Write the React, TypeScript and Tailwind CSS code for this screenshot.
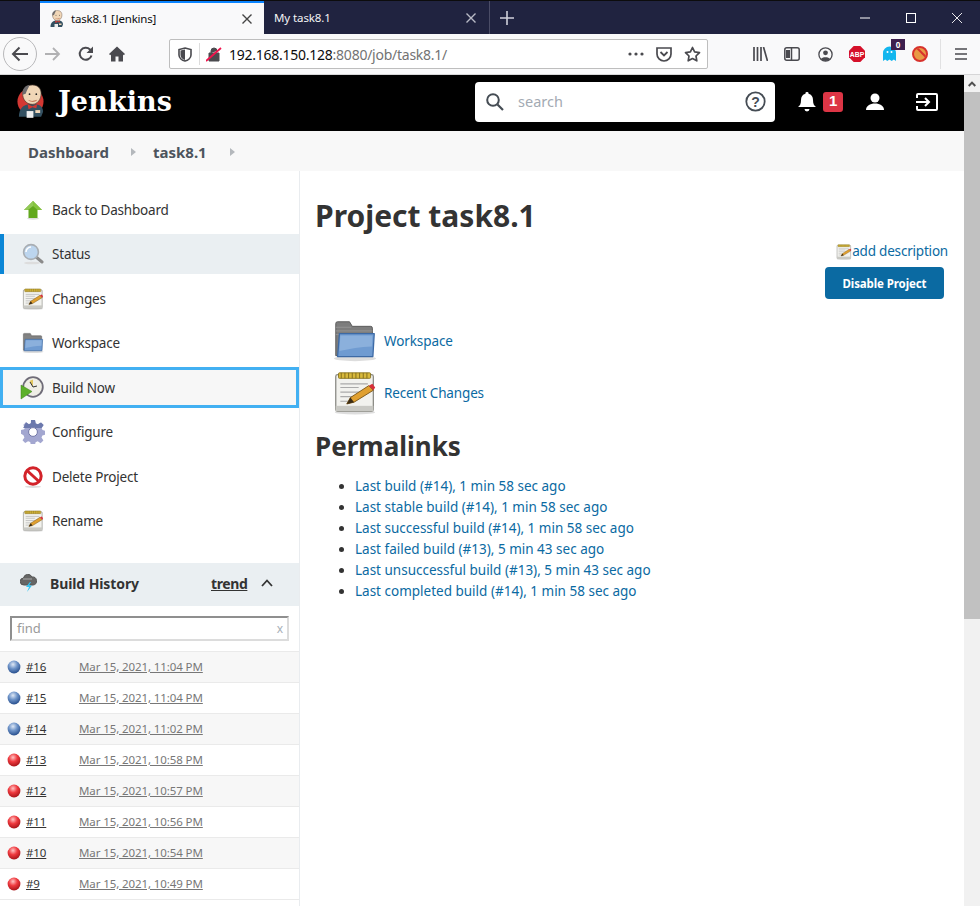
import React from "react";

const F = "[font-family:'Noto_Sans',sans-serif]";

function Notepad({ size = 20 }: { size?: number }) {
  return (
    <svg width={size} height={size} viewBox="0 0 48 48" className="shrink-0">
      <ellipse cx="24" cy="45" rx="22" ry="2.5" fill="#ddd" />
      <rect x="3" y="4" width="41" height="40" rx="2" fill="#f2f2ee" stroke="#8b8b85" strokeWidth="1.4" />
      <rect x="3" y="38" width="41" height="6" fill="#c9c9c4" />
      <rect x="6" y="2" width="35" height="6" rx="1" fill="#d8b93c" stroke="#8a7420" strokeWidth="1" />
      <path d="M9 2v6M13 2v6M17 2v6M21 2v6M25 2v6M29 2v6M33 2v6M37 2v6" stroke="#7f6a1c" strokeWidth="1" />
      <path d="M8 14h30M8 18h20M8 23h26M8 28h16M8 33h14" stroke="#aaa" strokeWidth="1.3" />
      <path d="M15 36l4-7 20-13 5 5-21 13z" fill="#e0a030" stroke="#7a5518" strokeWidth="1" />
      <path d="M39 16l4-2 3 4-2 3z" fill="#d7303a" />
      <path d="M15 36l4-7 4 5z" fill="#3a2c16" />
    </svg>
  );
}

function Folder({ size = 20 }: { size?: number }) {
  return (
    <svg width={size} height={size} viewBox="0 0 48 48" className="shrink-0">
      <ellipse cx="24" cy="43" rx="23" ry="3" fill="#ddd" />
      <path d="M3 5a2 2 0 0 1 2-2h13l3 5h20a2 2 0 0 1 2 2v30H3z" fill="#7d7d7d" stroke="#555" strokeWidth="1" />
      <path d="M3 9h17M3 13h40M3 17h40" stroke="#969696" strokeWidth="1" />
      <path d="M7 16h38l-1.5 25H5z" fill="#6f9bd1" stroke="#3d6aa5" strokeWidth="1.4" strokeLinejoin="round" />
      <path d="M8 18h35l-.6 12C30 30 18 33 7 35z" fill="#8bb0dc" />
    </svg>
  );
}

function Ball({ red }: { red?: boolean }) {
  const id = red ? "br" : "bb";
  return (
    <svg width="14" height="14" viewBox="0 0 14 14" className="shrink-0">
      <defs>
        <radialGradient id={id} cx="0.42" cy="0.3" r="0.75">
          <stop offset="0" stopColor={red ? "#ffc4c4" : "#dfe8f5"} />
          <stop offset="0.45" stopColor={red ? "#ef3a3f" : "#6d93c8"} />
          <stop offset="1" stopColor={red ? "#a01015" : "#1f4686"} />
        </radialGradient>
      </defs>
      <circle cx="7" cy="7" r="6.4" fill={`url(#${id})`} />
    </svg>
  );
}

function JenkinsFace({ size, red = true }: { size: number; red?: boolean }) {
  return (
    <svg width={size} height={size * 1.2} viewBox="0 0 30 36" className="shrink-0">
      {red && <circle cx="15" cy="18" r="13.5" fill="#d33833" />}
      <path d="M3 34c0-8 4-12 10-13l8 0c5 1 7 4 7 8l-2 5z" fill="#335061" />
      <path d="M7 12c-1-7 4-11 10-11s9 4 9 9c0 6-4 11-9 11-5 0-9-3-10-9z" fill="#f0d6b7" stroke="#4a3a30" strokeWidth=".7" />
      <path d="M7 11c-1-6 3-10 7-10-1 3-3 6-4 9z" fill="#6d6b6d" />
      <path d="M12 21l5 2 5-2-1 4-4-1-4 2z" fill="#d33833" />
      <path d="M12 16c2 2 7 2 10 0-1 3-8 3-10 0z" fill="#b25b3d" />
      <circle cx="14" cy="10.5" r=".9" fill="#222" />
      <circle cx="21" cy="10.5" r=".9" fill="#222" />
      <path d="M11 28h7v7h-7z" fill="#eee" />
      <path d="M20 27h5v3h-5z" fill="#f0d6b7" />
    </svg>
  );
}

function SideIcon({ name }: { name: string }) {
  switch (name) {
    case "up":
      return (
        <svg width="20" height="20" viewBox="0 0 20 20">
          <ellipse cx="10" cy="18.5" rx="6" ry="1.2" fill="#ddd" />
          <path d="M10 1L19 10H14.5V18H5.5V10H1z" fill="#62a81e" />
          <path d="M10 1L19 10H14.5L10 6z" fill="#86c440" />
          <path d="M10 1L1 10H5L10 6z" fill="#93c957" />
        </svg>
      );
    case "search":
      return (
        <svg width="22" height="22" viewBox="0 0 22 22">
          <ellipse cx="10" cy="20" rx="8" ry="1.3" fill="#ddd" />
          <path d="M13.5 13.5l6.5 5.5" stroke="#8b8b8b" strokeWidth="3" strokeLinecap="round" />
          <circle cx="9" cy="9" r="7.4" fill="#bcd5ee" stroke="#a9aeb3" strokeWidth="1.6" />
          <path d="M4 9a5 5 0 0 1 5-5" stroke="#fff" strokeWidth="1.5" fill="none" />
        </svg>
      );
    case "clock":
      return (
        <svg width="24" height="24" viewBox="0 0 24 24">
          <circle cx="13" cy="11" r="9.8" fill="#efeee6" stroke="#6f6c78" strokeWidth="1.8" />
          <path d="M13 3.5V11L9.5 5z" fill="#e4c860" />
          <path d="M13 11l4-1M13 11l-3-5" stroke="#333" strokeWidth="1" />
          <path d="M1 9L12 15.5L1 23z" fill="#5cb02a" stroke="#3c7f18" strokeWidth=".5" />
        </svg>
      );
    case "gear":
      return (
        <svg width="24" height="24" viewBox="0 0 24 24">
          <path
            d="M10 0h4l.7 3.4 2.2.9L20 2.4 22.6 5l-2 3 .9 2.1 3.1.7v3.9l-3.2.7-.9 2.1 1.9 2.9-2.8 2.8-2.9-1.9-2.1.9-.7 3.1h-4l-.7-3.2-2.1-.9-2.9 1.9-2.7-2.8 1.9-2.9-.9-2.1L0 13.8v-3.9l3.2-.7.9-2.1L2.2 5 5 2.3l2.9 1.9 2-.9z"
            fill="#a3a7d0"
          />
          <path d="M10 0h4l.7 3.4 2.2.9L20 2.4 22.6 5l-2 3H2.2L5 2.3l2.9 1.9 2-.9z" fill="#6c79ad" />
          <circle cx="12" cy="12" r="4.4" fill="#fff" stroke="#7479a8" />
        </svg>
      );
    case "stop":
      return (
        <svg width="22" height="22" viewBox="0 0 22 22">
          <ellipse cx="11" cy="20.8" rx="8" ry="1.1" fill="#ddd" />
          <circle cx="11" cy="10" r="8.2" fill="#fff" stroke="#d3232a" strokeWidth="3" />
          <path d="M5 4.5l12 11" stroke="#d3232a" strokeWidth="3" />
        </svg>
      );
    case "note":
      return <Notepad size={22} />;
    case "folder":
      return <Folder size={22} />;
    default:
      return null;
  }
}

const items = [
  { t: "Back to Dashboard", i: "up", h: "h-[46px] pb-[2px]" },
  { t: "Status", i: "search", h: "h-[40px]", active: true },
  { t: "Changes", i: "note", h: "h-[50px]" },
  { t: "Workspace", i: "folder", h: "h-[38px]" },
];
const items2 = [
  { t: "Configure", i: "gear" },
  { t: "Delete Project", i: "stop" },
  { t: "Rename", i: "note" },
];

const builds: [string, string, boolean][] = [
  ["#16", "Mar 15, 2021, 11:04 PM", false],
  ["#15", "Mar 15, 2021, 11:04 PM", false],
  ["#14", "Mar 15, 2021, 11:02 PM", false],
  ["#13", "Mar 15, 2021, 10:58 PM", true],
  ["#12", "Mar 15, 2021, 10:57 PM", true],
  ["#11", "Mar 15, 2021, 10:56 PM", true],
  ["#10", "Mar 15, 2021, 10:54 PM", true],
  ["#9", "Mar 15, 2021, 10:49 PM", true],
];

const permalinks = [
  "Last build (#14), 1 min 58 sec ago",
  "Last stable build (#14), 1 min 58 sec ago",
  "Last successful build (#14), 1 min 58 sec ago",
  "Last failed build (#13), 5 min 43 sec ago",
  "Last unsuccessful build (#13), 5 min 43 sec ago",
  "Last completed build (#14), 1 min 58 sec ago",
];

function TabBar() {
  return (
    <div className="h-[34px] bg-[#202340] flex items-stretch pl-[40px] border-t border-t-[#0c0c0d]">
      <div className="w-[224px] bg-[#f9f9fa] border-t-2 border-t-[#0a84ff] flex items-center pl-[9px] pr-[11px] text-[11.5px] tracking-[-0.2px] text-[#0c0c0d]">
        <JenkinsFace size={15} red={false} />
        <span className="ml-[7px] flex-1">task8.1 [Jenkins]</span>
        <svg width="12" height="12" viewBox="0 0 12 12"><path d="M1.5 1.5l9 9M10.5 1.5l-9 9" stroke="#444" strokeWidth="1.4" /></svg>
      </div>
      <div className="w-[226px] flex items-center pl-[10px] pr-[12px] text-[11.5px] tracking-[-0.1px] text-[#f4f4f6] border-r border-r-[#4a4c66]">
        <span className="flex-1">My task8.1</span>
        <svg width="12" height="12" viewBox="0 0 12 12"><path d="M1.5 1.5l9 9M10.5 1.5l-9 9" stroke="#b9bac6" strokeWidth="1.4" /></svg>
      </div>
      <div className="w-[34px] flex items-center justify-center">
        <svg width="14" height="14" viewBox="0 0 14 14"><path d="M7 0v14M0 7h14" stroke="#cfd0da" strokeWidth="1.6" /></svg>
      </div>
      <div className="flex-1 flex items-center justify-end text-white">
        <div className="w-[46px] flex justify-center">
          <svg width="10" height="10" viewBox="0 0 10 10"><path d="M0 5h10" stroke="#fff" /></svg>
        </div>
        <div className="w-[46px] flex justify-center">
          <svg width="10" height="10" viewBox="0 0 10 10"><rect x=".5" y=".5" width="9" height="9" fill="none" stroke="#fff" /></svg>
        </div>
        <div className="w-[46px] flex justify-center">
          <svg width="10" height="10" viewBox="0 0 10 10"><path d="M0 0l10 10M10 0L0 10" stroke="#fff" strokeWidth=".9" /></svg>
        </div>
      </div>
    </div>
  );
}

function ToolBar() {
  const g = "#4a4a4f";
  return (
    <div className="h-[41px] bg-[#f9f9fa] border-b border-b-[#d6d6d7] flex items-center">
      <div className="ml-[3px] w-[34px] h-[34px] rounded-full border border-[#b8b8ba] bg-[#f9f9fa] flex items-center justify-center">
        <svg width="18" height="16" viewBox="0 0 18 16"><path d="M17 8H2M8.5 1.5L2 8l6.5 6.5" stroke={g} strokeWidth="2" fill="none" /></svg>
      </div>
      <svg className="ml-[8px]" width="16" height="14" viewBox="0 0 16 14"><path d="M0 7h14M8 1l6 6-6 6" stroke="#b1b1b3" strokeWidth="1.8" fill="none" /></svg>
      <svg className="ml-[17px]" width="16" height="16" viewBox="0 0 16 16"><path d="M13.5 9.5a6 6 0 1 1-1.5-6L14 6" stroke={g} strokeWidth="2" fill="none" /><path d="M15 .5V7H8.5z" fill={g} /></svg>
      <svg className="ml-[15px]" width="16" height="16" viewBox="0 0 16 16"><path d="M8 .5L0 8l1.2 1.2L2 8.5V15.5h4.5V10.5h3v5H14V8.5l.8.7L16 8z" fill={g} /></svg>
      <div className="ml-[44px] w-[539px] h-[30px] bg-white border border-[#bebebe] rounded-[2px] flex items-center text-[14px] tracking-[-0.25px]">
        <svg className="ml-[8px]" width="14" height="15" viewBox="0 0 14 15"><path d="M7 1l6 1.6V8c0 3-3 5.3-6 6-3-.7-6-3-6-6V2.6z" fill="none" stroke={g} strokeWidth="1.6" /><path d="M7 2.5V13C4.5 12.3 2.5 10.5 2.5 8V3.6z" fill={g} /></svg>
        <div className="ml-[7px] h-[22px] w-px bg-[#dcdcdc]" />
        <svg className="ml-[6px]" width="16" height="16" viewBox="0 0 16 16"><path d="M3 7h10v8H3zM5 7V5a3 3 0 0 1 6 0" fill={g} stroke={g} /><path d="M0 15L15 2" stroke="#f0134d" strokeWidth="1.8" /></svg>
        <span className="ml-[7px] text-[#0c0c0d]">192.168.150.128<span className="text-[#737373]">:8080/job/task8.1/</span></span>
        <div className="ml-auto flex items-center">
          <svg width="16" height="4" viewBox="0 0 16 4"><circle cx="2" cy="2" r="1.6" fill={g} /><circle cx="8" cy="2" r="1.6" fill={g} /><circle cx="14" cy="2" r="1.6" fill={g} /></svg>
          <svg className="ml-[12px]" width="16" height="15" viewBox="0 0 16 15"><path d="M1 1h14v6a7 7 0 0 1-14 0z" fill="none" stroke={g} strokeWidth="1.7" /><path d="M4.5 5L8 8.5 11.5 5" fill="none" stroke={g} strokeWidth="1.8" /></svg>
          <svg className="ml-[12px] mr-[6px]" width="17" height="16" viewBox="0 0 17 16"><path d="M8.5 1.5l2.1 4.4 4.9.7-3.5 3.4.8 4.8-4.3-2.3-4.3 2.3.8-4.8L1.5 6.6l4.9-.7z" fill="none" stroke={g} strokeWidth="1.7" strokeLinejoin="round" /></svg>
        </div>
      </div>
      <svg className="ml-[45px]" width="15" height="14" viewBox="0 0 15 14"><path d="M1 0v14M4.5 0v14M8 0v14M10.5 0l4 14" stroke={g} strokeWidth="1.7" /></svg>
      <svg className="ml-[16px]" width="16" height="14" viewBox="0 0 16 14"><rect x=".8" y=".8" width="14.4" height="12.4" rx="2" fill="none" stroke={g} strokeWidth="1.5" /><path d="M7.5 1v12" stroke={g} strokeWidth="1.5" /><path d="M2 3h4v8H2z" fill={g} /></svg>
      <svg className="ml-[18px]" width="15" height="15" viewBox="0 0 15 15"><circle cx="7.5" cy="7.5" r="6.6" fill="none" stroke={g} strokeWidth="1.3" /><circle cx="7.5" cy="5.8" r="2.4" fill={g} /><path d="M3 12c1-2.5 8-2.5 9 0a6 6 0 0 1-9 0z" fill={g} /></svg>
      <svg className="ml-[16px]" width="16" height="16" viewBox="0 0 16 16"><path d="M4.7 0h6.6L16 4.7v6.6L11.3 16H4.7L0 11.3V4.7z" fill="#d5102a" /><text x="8" y="10.5" textAnchor="middle" fontSize="6.8" fontWeight="700" fill="#fff" fontFamily="Liberation Sans">ABP</text></svg>
      <div className="ml-[18px] relative w-[16px] h-[16px]">
        <svg width="13" height="16" viewBox="0 0 13 16"><path d="M0 7a6.5 6.5 0 0 1 13 0v8l-2.2-1.6L8.7 15 6.5 13.4 4.3 15 2.2 13.4 0 15z" fill="#13b6ee" /><circle cx="4.5" cy="6" r="1" fill="#fff" /><circle cx="8.5" cy="6" r="1" fill="#fff" /></svg>
        <div className="absolute left-[8px] -top-[7px] w-[14px] h-[11px] bg-[#3d1f4e] text-white text-[8px] font-bold leading-[11px] text-center">0</div>
      </div>
      <div className="ml-[13px] w-[16px] h-[16px] rounded-full border-2 border-[#d8322c] bg-[#e89a45] overflow-hidden relative">
        <div className="absolute left-[-2px] top-[4px] w-[20px] h-[2px] bg-[#d8322c] rotate-45" />
      </div>
      <div className="ml-[12px] h-[30px] w-px bg-[#e1e1e2]" />
      <svg className="ml-[14px]" width="12" height="12" viewBox="0 0 12 12"><path d="M0 1h12M0 6h12M0 11h12" stroke={g} strokeWidth="1.7" /></svg>
    </div>
  );
}

function Header() {
  return (
    <div className="h-[56px] bg-black flex items-center shrink-0 pb-[3px]">
      <div className="ml-[16px]"><JenkinsFace size={29} /></div>
      <span className="ml-[13px] text-[27px] font-bold text-white [font-family:'DejaVu_Serif',serif] tracking-[0.1px] leading-none">Jenkins</span>
      <div className="ml-[303px] w-[300px] h-[40px] bg-white rounded-[4px] flex items-center pl-[10px] pr-[9px]">
        <svg width="20" height="20" viewBox="0 0 20 20"><circle cx="8" cy="8" r="5.8" fill="none" stroke="#454c54" strokeWidth="2" /><path d="M12.5 12.5L18 18" stroke="#454c54" strokeWidth="2.2" /></svg>
        <span className="ml-[13px] flex-1 text-[14.5px] text-[#a3aab3]">search</span>
        <svg width="21" height="21" viewBox="0 0 21 21"><circle cx="10.5" cy="10.5" r="9.2" fill="none" stroke="#454c54" strokeWidth="1.8" /><text x="10.5" y="15.5" textAnchor="middle" fontSize="14" fontWeight="700" fill="#454c54" fontFamily="Liberation Sans">?</text></svg>
      </div>
      <svg className="ml-[23px]" width="18" height="20" viewBox="0 0 18 20"><path d="M9 0a1.5 1.5 0 0 1 1.5 1.8C13.5 2.5 15 5 15 8c0 4 1 5.500 3 7H0c2-1.500 3-3 3-7 0-3 1.500-5.500 4.500-6.200A1.500 1.500 0 0 1 9 0zM6.500 17h5a2.500 2.500 0 0 1-5 0z" fill="#fff" /></svg>
      <div className="ml-[7px] w-[20px] h-[20px] rounded-[3px] bg-[#dc3545] text-white text-[15px] font-bold flex items-center justify-center [font-family:'Liberation_Sans',sans-serif]">1</div>
      <svg className="ml-[23px]" width="18" height="18" viewBox="0 0 18 18"><circle cx="9" cy="5" r="4.5" fill="#fff" /><path d="M0 17c0-4 4-6.5 9-6.5s9 2.5 9 6.5z" fill="#fff" /></svg>
      <svg className="ml-[32px]" width="22" height="18" viewBox="0 0 22 18"><path d="M1 5V2a1 1 0 0 1 1-1h18a1 1 0 0 1 1 1v14a1 1 0 0 1-1 1H2a1 1 0 0 1-1-1v-3" fill="none" stroke="#fff" strokeWidth="2" /><path d="M0 9h12M9 5l4 4-4 4" stroke="#fff" strokeWidth="2" fill="none" /></svg>
    </div>
  );
}

function Breadcrumb() {
  return (
    <div className="h-[40px] bg-[#f8f8f8] flex items-center pl-[28px] pt-[2px] text-[15px] font-bold text-[#4d545d] shrink-0">
      <span>Dashboard</span>
      <span className="ml-[22px] w-0 h-0 border-y-[4px] border-y-transparent border-l-[5px] border-l-[#b4b8bc]" />
      <span className="ml-[17px]">task8.1</span>
      <span className="ml-[23px] w-0 h-0 border-y-[4px] border-y-transparent border-l-[5px] border-l-[#b4b8bc]" />
    </div>
  );
}

function SideRow({ t, i, active, h }: { t: string; i: string; active?: boolean; h?: string }) {
  return (
    <div className={`flex items-center ${h ?? "h-[44.5px]"} ${active ? "bg-[#eaeff2] border-l-4 border-l-[#0b86d6] pl-[17px]" : "pl-[21px]"} text-[#333]`}>
      <div className="w-[24px] flex justify-center"><SideIcon name={i} /></div>
      <span className="ml-[7px] text-[13.5px] tracking-[-0.2px]">{t}</span>
    </div>
  );
}

function Sidebar() {
  return (
    <div className="w-[300px] shrink-0 border-r border-r-[#e9ecef] flex flex-col">
      <div className="h-[17px]" />
      {items.map((x) => <SideRow key={x.t} {...x} />)}
      <div className="mt-[5px] h-[41px] border-[3px] border-[#42b0f2] bg-[#f7f7f7] flex items-center pl-[17px] pt-[1px] text-[#333]">
        <div className="w-[26px] -ml-[1px] flex justify-center"><SideIcon name="clock" /></div>
        <span className="ml-[7px] text-[13.5px] tracking-[-0.2px]">Build Now</span>
      </div>
      <div className="h-[2px]" />
      {items2.map((x) => <SideRow key={x.t} {...x} />)}
      <div className="h-[19.5px]" />
      <div className="h-[43px] bg-[#eaeff2] flex items-center pl-[20px] pb-[3px] text-[#333] shrink-0">
        <svg width="17" height="18" viewBox="0 0 17 18"><path d="M4 11a3.5 3.5 0 0 1-.5-7A4.5 4.5 0 0 1 12 3a4 4 0 0 1 1 8z" fill="#666" stroke="#555" /><path d="M3 5h9" stroke="#aaa" /><path d="M10 8l-4 5h3l-2 5 5-6.5H9l2-3.5z" fill="#36c6f4" /></svg>
        <span className="ml-[13px] w-[88px] whitespace-nowrap text-[14px] font-bold tracking-[-0.1px]">Build History</span>
        <span className="ml-[73px] text-[14px] font-bold underline tracking-[-0.4px]">trend</span>
        <svg className="ml-[14px]" width="12" height="8" viewBox="0 0 12 8"><path d="M1 7l5-5.5L11 7" fill="none" stroke="#333" strokeWidth="1.8" /></svg>
      </div>
      <div className="h-[45px] flex items-center pl-[10px] pr-[10px] shrink-0">
        <div className="w-[279px] h-[25px] border-2 border-[#dcdcdc] border-t-[#8f8f8f] border-l-[#8f8f8f] flex items-center pl-[5px] pr-[4px] pt-[1px] text-[13px] text-[#9a9a9a] bg-white">
          <span className="flex-1">find</span>
          <span className="text-[12px] text-[#a8b0b8]">x</span>
        </div>
      </div>
      {builds.map(([n, d, red], idx) => (
        <div key={n} className={`h-[31px] shrink-0 border-t border-t-[#eaeaea] flex items-center pl-[7px] pb-[1px] ${idx % 2 === 0 ? "bg-[#f7f7f7]" : "bg-white"}`}>
          <Ball red={red} />
          <span className="ml-[5px] w-[53px] text-[11.5px] tracking-[-0.1px] text-[#333] underline">{n}</span>
          <span className="text-[11.5px] tracking-[-0.1px] text-[#777] underline">{d}</span>
        </div>
      ))}
      <div className="flex-1 border-t border-t-[#eaeaea]" />
    </div>
  );
}

function Main() {
  return (
    <div className="flex-1 min-w-0 pl-[15px] pr-[16px] relative text-[#333]">
      <h1 className="mt-[24px] text-[30px] leading-[41px] font-bold text-[#333]">Project task8.1</h1>
      <div className="mt-[6px] flex items-center justify-end text-[13.5px] tracking-[-0.2px] leading-[19px] text-[#0b6aa2]">
        <Notepad size={16} />
        <span>add description</span>
      </div>
      <div className="mt-[6px] flex justify-end pr-[4px]">
        <div className="w-[119px] h-[32px] pt-[1px] bg-[#0b6aa2] rounded-[4px] text-white text-[11.5px] tracking-[-0.1px] font-bold flex items-center justify-center">Disable Project</div>
      </div>
      <div className="mt-[18px] pl-[18px] flex items-center h-[48px] text-[#0b6aa2] text-[13.5px] tracking-[-0.1px]">
        <Folder size={44} />
        <span className="ml-[7px]">Workspace</span>
      </div>
      <div className="mt-[4px] pl-[18px] flex items-center h-[48px] text-[#0b6aa2] text-[13.5px] tracking-[-0.15px]">
        <Notepad size={44} />
        <span className="ml-[7px]">Recent Changes</span>
      </div>
      <h2 className="mt-[11px] text-[26px] leading-[36px] font-bold text-[#333]">Permalinks</h2>
      <ul className="mt-[12px] ml-[40px] list-disc text-[#0b6aa2] text-[13.5px] marker:text-[#333]">
        {permalinks.map((p) => <li key={p} className="leading-[21px]">{p}</li>)}
      </ul>
    </div>
  );
}

function Scrollbar() {
  return (
    <div className="w-[16px] shrink-0 bg-[#f1f1f1] flex flex-col">
      <div className="h-[17px] flex items-center justify-center">
        <svg width="8" height="6" viewBox="0 0 8 6"><path d="M.7 5L4 1.6 7.3 5" fill="none" stroke="#505050" strokeWidth="2" /></svg>
      </div>
      <div className="h-[527px] bg-[#c1c1c1]" />
    </div>
  );
}

export default function App() {
  return (
    <div className={`h-[906px] w-[980px] overflow-hidden flex flex-col bg-white ${F}`}>
      <TabBar />
      <ToolBar />
      <div className="flex-1 min-h-0 flex">
        <div className="flex-1 min-w-0 flex flex-col overflow-hidden">
          <Header />
          <Breadcrumb />
          <div className="flex-1 min-h-0 flex">
            <Sidebar />
            <Main />
          </div>
        </div>
        <Scrollbar />
      </div>
    </div>
  );
}
